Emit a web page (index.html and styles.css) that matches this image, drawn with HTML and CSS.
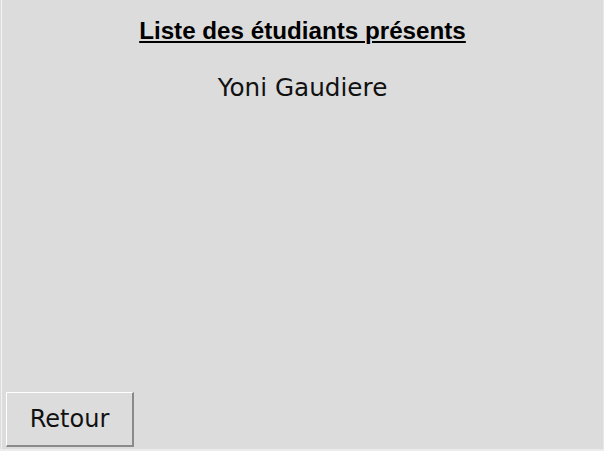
FILE: index.html
```html
<!DOCTYPE html>
<html lang="fr">
<head>
<meta charset="utf-8">
<link rel="stylesheet" href="styles.css">
</head>
<body>
<div class="window">
  <div class="panel">
    <h1 class="title">Liste des étudiants présents</h1>
    <ul class="list">
      <li class="student">Yoni Gaudiere</li>
    </ul>
    <div class="footer">
      <button class="btn">Retour</button>
    </div>
  </div>
</div>
</body>
</html>
```
FILE: styles.css
```css
html, body {
  margin: 0;
  padding: 0;
  background: #dcdcdc;
}
.window {
  width: 604px;
  height: 451px;
  box-sizing: border-box;
  padding-left: 1px;
  border-bottom: 2px solid #ececec;
  display: flex;
}
.panel {
  flex: 1;
  border-left: 1px solid #f2f2f2;
  border-right: 1px solid #e8e8e8;
  display: flex;
  flex-direction: column;
}
.title {
  margin: 16px 0 0 0;
  text-align: center;
  font-family: "Liberation Sans", Arial, sans-serif;
  font-weight: bold;
  font-size: 24.2px;
  line-height: 30px;
  color: #000;
  text-decoration: underline;
  text-decoration-thickness: 2px;
  text-underline-offset: 2px;
}
.list {
  list-style: none;
  margin: 27px 0 0 0;
  padding: 0;
  flex: 1;
}
.student {
  text-align: center;
  font-family: "DejaVu Sans", sans-serif;
  font-size: 24.7px;
  line-height: 30px;
  color: #111;
}
.footer {
  display: flex;
  padding: 0 0 2px 4px;
}
.btn {
  width: 128px;
  height: 55px;
  box-sizing: border-box;
  background: #dcdcdc;
  border-style: solid;
  border-width: 1px 2px 2px 1px;
  border-color: #ffffff #8a8a8a #8a8a8a #ffffff;
  font-family: "DejaVu Sans", sans-serif;
  font-size: 24px;
  color: #111;
  padding: 0;
}
```
